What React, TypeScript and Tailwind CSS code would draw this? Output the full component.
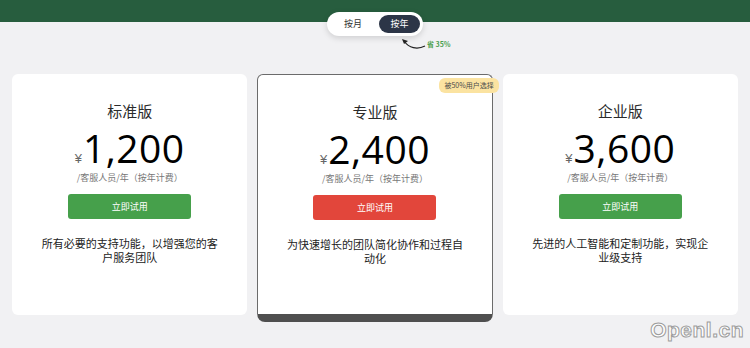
import React from 'react';

type Plan = {
  name: string;
  price: string;
  desc: string;
  featured?: boolean;
};

const plans: Plan[] = [
  { name: '标准版', price: '1,200', desc: '所有必要的支持功能，以增强您的客户服务团队' },
  { name: '专业版', price: '2,400', desc: '为快速增长的团队简化协作和过程自动化', featured: true },
  { name: '企业版', price: '3,600', desc: '先进的人工智能和定制功能，实现企业级支持' },
];

const cjk = "font-['Noto_Sans_CJK_SC','Noto_Sans',sans-serif]";

const PlanCard: React.FC<{ plan: Plan }> = ({ plan }) => {
  const { featured } = plan;
  return (
    <div
      className={`relative flex flex-col items-center bg-white rounded-[6px] ${
        featured
          ? 'h-[248px] border border-[#6b6b6b] border-b-[8px] border-b-[#4f4f4f] rounded-b-[8px]'
          : 'h-[241px]'
      }`}
    >
      {featured && (
        <div className="absolute top-[3px] right-[-7px] h-[15px] px-[5px] flex items-center rounded-[6px] bg-[#fbe3a1] text-[7px] text-[#4a4a4a]">
          被50%用户选择
        </div>
      )}
      {/* Title */}
      <div className={`mt-[27px] text-[15px] leading-[20px] text-[#2b2b2b] ${featured ? 'mt-[26px]' : ''}`}>
        {plan.name}
      </div>
      {/* Price */}
      <div className="mt-[5px] h-[44px] flex items-baseline">
        <span className="text-[13px] leading-none text-[#666] mr-[1px] font-['Liberation_Sans',sans-serif]">¥</span>
        <span className="text-[39px] leading-[44px] text-black font-normal font-['Open_Sans','Lato',sans-serif] tracking-[0.5px]">
          {plan.price}
        </span>
      </div>
      <div className="mt-[2px] text-[9px] leading-[12px] text-[#777]">/客服人员/年（按年计费）</div>
      {/* Button */}
      <button
        className={`mt-[10px] w-[123px] h-[25px] rounded-[3px] text-[9px] text-white flex items-center justify-center ${
          featured ? 'bg-[#e2463b]' : 'bg-[#46a04b]'
        }`}
      >
        立即试用
      </button>
      {/* Description */}
      <p className="mt-[17px] w-[182px] text-center text-[11px] leading-[14px] text-[#222]">{plan.desc}</p>
    </div>
  );
};

export default function App() {
  return (
    <div className={`relative w-[750px] h-[348px] bg-[#f1f1f3] overflow-hidden ${cjk}`}>
      {/* Top bar */}
      <div className="h-[22px] bg-[#275d3e]" />

      {/* Billing toggle */}
      <div className="-mt-[10px] flex justify-center">
        <div className="w-[96px] h-[24px] bg-white rounded-full shadow-[0_2px_6px_rgba(0,0,0,0.15)] flex items-center pl-[17px] pr-[3px]">
          <span className="text-[9px] text-[#333]">按月</span>
          <span className="ml-auto w-[41px] h-[18px] rounded-full bg-[#2c3547] text-white text-[9px] flex items-center justify-center">
            按年
          </span>
        </div>
      </div>

      {/* Savings hint */}
      <div className="flex justify-start pl-[401px] h-[16px] items-start">
        <svg width="26" height="12" viewBox="0 0 26 12" className="mt-[2px]">
          <path d="M24 8 C 16 12, 8 10, 3 3" fill="none" stroke="#222" strokeWidth="1.2" />
          <path d="M1 1 L7 3 L3 6 Z" fill="#222" />
        </svg>
        <span className="mt-[3px] text-[7px] text-[#4aa04e] font-semibold">省 35%</span>
      </div>

      {/* Cards */}
      <div className="mt-[22px] px-[12px] grid grid-cols-3 gap-[10px] items-start">
        {plans.map((p) => (
          <PlanCard key={p.name} plan={p} />
        ))}
      </div>

      {/* Watermark */}
      <div className="absolute right-[6px] bottom-[3px] text-[21px] font-bold text-white font-['Liberation_Sans',sans-serif] [-webkit-text-stroke:1px_#9c9c9c] tracking-[0.5px]">
        Openl.cn
      </div>
    </div>
  );
}
